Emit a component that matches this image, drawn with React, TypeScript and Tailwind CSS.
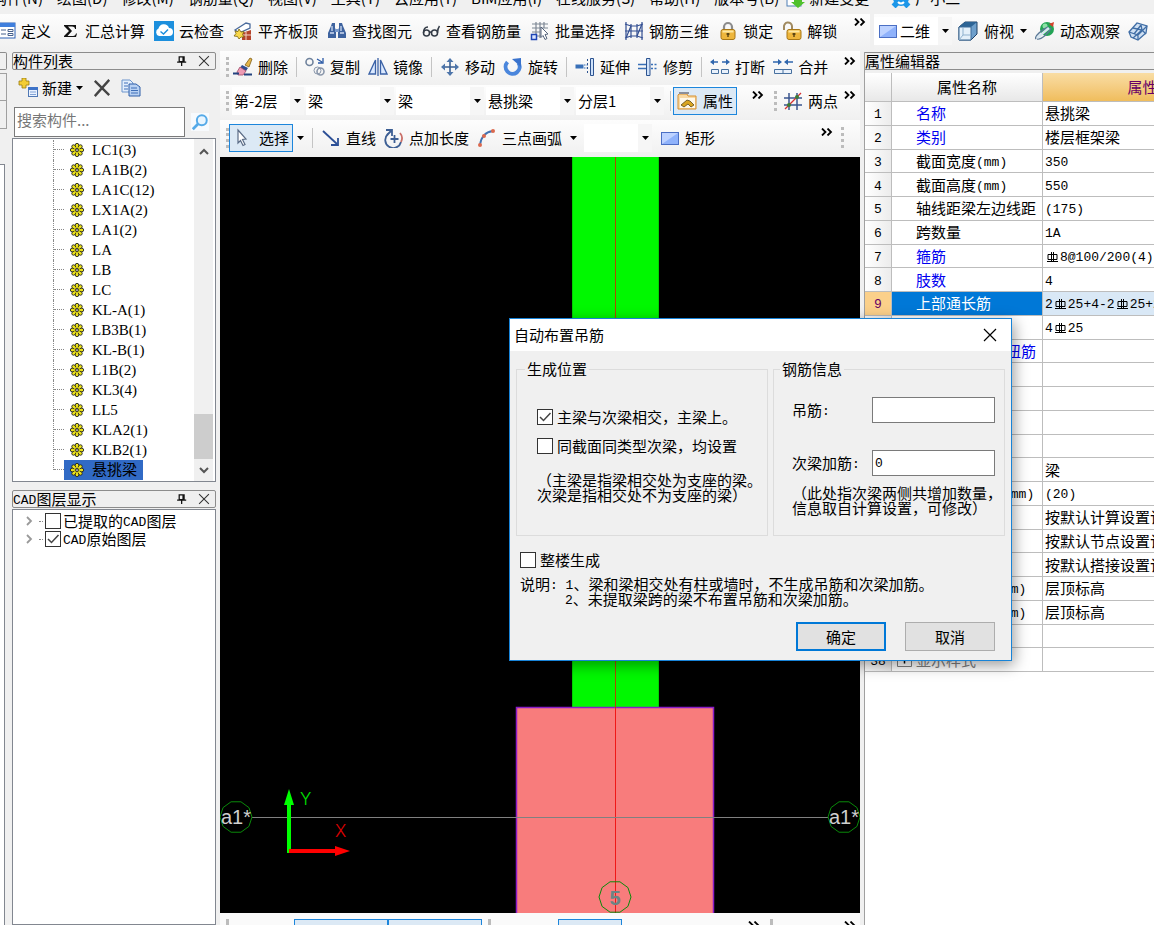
import type { ReactNode } from 'react';

const MENUS = ['绘图(D)', '修改(M)', '钢筋量(Q)', '视图(V)', '工具(T)', '云应用(Y)', 'BIM应用(I)', '在线服务(S)', '帮助(H)', '版本号(B)'];

const COMPONENTS = [
  'LC1(3)', 'LA1B(2)', 'LA1C(12)', 'LX1A(2)', 'LA1(2)', 'LA', 'LB', 'LC', 'KL-A(1)',
  'LB3B(1)', 'KL-B(1)', 'L1B(2)', 'KL3(4)', 'LL5', 'KLA2(1)', 'KLB2(1)', '悬挑梁',
];

type Prop = { no: string; name: string; value: string; blue?: boolean; child?: boolean; active?: boolean; group?: boolean };

const PROPS: Prop[] = [
  { no: '1', name: '名称', value: '悬挑梁', blue: true },
  { no: '2', name: '类别', value: '楼层框架梁', blue: true },
  { no: '3', name: '截面宽度(mm)', value: '350' },
  { no: '4', name: '截面高度(mm)', value: '550' },
  { no: '5', name: '轴线距梁左边线距', value: '(175)' },
  { no: '6', name: '跨数量', value: '1A' },
  { no: '7', name: '箍筋', value: 'Φ8@100/200(4)', blue: true },
  { no: '8', name: '肢数', value: '4', blue: true },
  { no: '9', name: '上部通长筋', value: '2Φ25+4-2Φ25+2', active: true },
  { no: '10', name: '下部通长筋', value: '4Φ25', blue: true },
  { no: '11', name: '侧面构造或受扭筋', value: '', blue: true },
  { no: '12', name: '侧面纵筋', value: '' },
  { no: '13', name: '拉筋', value: '' },
  { no: '14', name: '其它箍筋', value: '' },
  { no: '15', name: '其它属性', value: '', group: true },
  { no: '16', name: '汇总信息', value: '梁', child: true },
  { no: '17', name: '保护层厚度(mm)', value: '(20)', child: true },
  { no: '18', name: '计算设置', value: '按默认计算设置计算', child: true },
  { no: '19', name: '节点设置', value: '按默认节点设置计算', child: true },
  { no: '20', name: '搭接设置', value: '按默认搭接设置计算', child: true },
  { no: '21', name: '起点顶标高(m)', value: '层顶标高', child: true },
  { no: '22', name: '终点顶标高(m)', value: '层顶标高', child: true },
  { no: '23', name: '锚固搭接', value: '', group: true },
  { no: '38', name: '显示样式', value: '', group: true },
];

const PETALS = Array.from({ length: 8 }, (_, i) => (i * Math.PI) / 4);

/* ---------- icons, all on a 20 x 20 grid ---------- */

const ICONS: Record<string, ReactNode> = {
  define: (
    <>
      <rect x="1" y="2" width="18" height="15" fill="#fff" stroke="#2f62b5" />
      <rect x="1" y="2" width="18" height="4" fill="#3f7fdd" />
      <path d="M5 9h5M5 13h5M12 8.500h5v2h-5zM12 12.500h5v2h-5z" stroke="#47618c" fill="none" />
    </>
  ),
  sigma: <path d="M4 4h12v4h-1c0-1.500-1-2.500-3-2.500H8l4 4.500-4.500 5H13c2 0 2.500-1 3-2.500h1L16 16H4v-1l5-5-5-5z" fill="#111" />,
  cloud: (
    <>
      <rect width="20" height="20" fill="#1c8fdd" />
      <path d="M5 15a4 4 0 0 1-.5-7.500A5.500 5.500 0 0 1 15 7a4 4 0 0 1 0 8z" fill="#fff" />
      <path d="M6.500 10.500l3 2.500 4.500-4.500" stroke="#1c8fdd" strokeWidth="1.500" fill="none" />
    </>
  ),
  align: (
    <>
      <path d="M2 9L13 2l4 1v4L6 12z" fill="#fff" stroke="#4a6a9c" strokeWidth="1.300" />
      <path d="M9 12l9-3v10H9z" fill="#b4432b" />
      <path d="M13 11v8M9 14h9" stroke="#f1d5c8" />
      <path d="M6 8l2 3 3-.5-1.500 3L11 16H8l-2 2-1.500-2.500L1 15l2-2.500L2 10l3 .5z" fill="#f9d849" stroke="#7a6512" strokeWidth=".8" />
    </>
  ),
  find: (
    <>
      <path d="M5 2h3v5l1 2v8H1v-5l3-7zM12 2h3l1 3 3 7v5h-8V9l1-2z" fill="#3e639f" />
      <path d="M8 8h4v3H8z" fill="#7d9ccc" />
      <path d="M3 12h4M13 12h4M5 5v5M14 5v5" stroke="#cfdcf2" strokeWidth="1.300" />
    </>
  ),
  glasses: (
    <g fill="none" stroke="#333b46" strokeWidth="1.500">
      <circle cx="5.500" cy="12" r="3" />
      <circle cx="13.500" cy="12" r="3" />
      <path d="M2.500 12c0-4 2-6 4.500-6M16.500 12c0-3 .5-5 2-7M8.500 11.500q1-1 2 0" />
    </g>
  ),
  batch: (
    <>
      <path d="M2 3h16M2 7h16M2 11h8M6 1v16M10 1v16M14 1v6M6 15h6" stroke="#7d8794" strokeWidth="1.200" />
      <rect x="1.500" y="13.500" width="5" height="5" fill="#dbe6ff" stroke="#1f46b5" strokeWidth="1.500" />
      <path d="M11 6l7 7-3 .5 2 4-2 1-2-4-2 2z" fill="#fff" stroke="#56657d" />
    </>
  ),
  rebar3d: (
    <g stroke="#334f92" strokeWidth="1.200" fill="none">
      <path d="M2 1v18M7 3v14M13 3v14M18 1v18" />
      <path d="M1 3l6 2h6l6-2M1 10h18M1 17l6-2h6l6 2M2 17L7 5M13 15l5-12" />
    </g>
  ),
  lock: (
    <>
      <path d="M6 10V6a4 4 0 0 1 8 0v4" fill="none" stroke="#8c8c8c" strokeWidth="2.200" />
      <rect x="3" y="8.500" width="14" height="10" rx="2" fill="#eeb63c" stroke="#a87716" />
      <path d="M4.500 10.500h11" stroke="#fde7a1" strokeWidth="2" />
      <path d="M10 12v4M8.500 13h3" stroke="#4d3a10" strokeWidth="1.300" />
    </>
  ),
  unlock: (
    <>
      <path d="M2 9V6a4 4 0 0 1 8-1v4" fill="none" stroke="#a08a60" strokeWidth="2" />
      <rect x="5" y="8.500" width="14" height="10" rx="2" fill="#eeb63c" stroke="#a87716" />
      <path d="M6.500 10.500h11" stroke="#fde7a1" strokeWidth="2" />
      <path d="M12 12v4M10.500 13h3" stroke="#4d3a10" strokeWidth="1.300" />
    </>
  ),
  rect: (
    <>
      <rect x="1.500" y="4.500" width="17" height="12" fill="#8fb2fb" stroke="#4b6fc4" />
      <path d="M2 16V5h16z" fill="#bdd2ff" />
    </>
  ),
  cube: (
    <>
      <path d="M1 6l6-5h12v12l-6 6H1z" fill="#6e9fcb" stroke="#1f4064" />
      <path d="M1 6l6-5h12l-6 5z" fill="#2d6495" />
      <path d="M1 6h12v13H1z" fill="#e4f0fa" stroke="#3d6b97" />
      <path d="M5 7v7l-4 5M5 14h8" fill="none" stroke="#8fb1ce" />
    </>
  ),
  orbit: (
    <>
      <circle cx="12" cy="8" r="7" fill="#23a455" />
      <circle cx="10" cy="5" r="2.500" fill="#8be2a5" />
      <path d="M1 18c-2-3 6-9 12-12" fill="none" stroke="#5a7896" strokeWidth="1.500" />
      <path d="M2 18c4 1 12-6 14-11" fill="none" stroke="#5a7896" strokeWidth="1.500" />
      <path d="M2 17L14 7" stroke="#d7e6f0" strokeWidth="2.500" />
      <path d="M14 3l5-2-1 5" fill="#d6402c" />
    </>
  ),
  mesh: (
    <g fill="#cfe0f3" stroke="#3f6da5" strokeWidth="1.300">
      <path d="M1 11l8-9 10 3-1 7-8 7-7-3z" />
      <path d="M1 11l9 3 9-9M10 14v5M5 7l9 2 4 4M5 17l9-8-1-5M6 13l7-9" fill="none" />
    </g>
  ),
  erase: (
    <>
      <path d="M12 8l5-7 2 1-3 8z" fill="#e5b64a" stroke="#806019" strokeWidth=".8" />
      <path d="M9 8l6 3-2 3-6-3z" fill="#2e4c92" />
      <path d="M7 10l6 4-3 4H5l-1-3z" fill="#ee9bb4" stroke="#a04a68" strokeWidth=".8" />
      <path d="M0 16.500h6M11 17.500h8" stroke="#23427f" strokeWidth="2" />
    </>
  ),
  copyObj: (
    <g fill="none">
      <circle cx="4.500" cy="5" r="3.500" stroke="#70839d" strokeWidth="1.600" />
      <circle cx="15.500" cy="14.500" r="3.500" stroke="#8a97ab" strokeWidth="1.600" />
      <circle cx="12.500" cy="13.500" r="3.500" stroke="#8a97ab" />
      <path d="M12 2l5 3M18 1v5h-5" stroke="#2b5aa6" strokeWidth="1.300" />
    </g>
  ),
  mirror: (
    <g fill="#dbe9ff" stroke="#3b62a6" strokeWidth="1.300">
      <path d="M7.500 3v14H1zM12.500 3v14H19z" />
      <path d="M10 1v18" />
    </g>
  ),
  move: (
    <>
      <path d="M10 3v14M3 10h14" stroke="#3a5f93" strokeWidth="1.600" />
      <path d="M10 1l3.500 4h-7zM10 19l3.500-4h-7zM1 10l4-3.500v7zM19 10l-4-3.500v7z" fill="#4d75ab" />
    </>
  ),
  rotate: (
    <>
      <path d="M4.500 5a7 7 0 1 0 11 1" fill="none" stroke="#4a86dc" strokeWidth="4" />
      <path d="M9 2l9-1v9z" fill="#3a73cd" />
    </>
  ),
  extend: (
    <>
      <path d="M.5 7.500h8v4h-8z" fill="#3970b8" />
      <path d="M9 8h5M9 11h5" stroke="#3970b8" strokeDasharray="1.500 1" />
      <path d="M15.500 1.500h3v17h-3z" fill="#cfe2fa" stroke="#2c5390" />
      <path d="M12.500 2v16" stroke="#2c5390" strokeDasharray="2 2" />
    </>
  ),
  trim: (
    <>
      <path d="M0 7.500h8M0 11.500h8" stroke="#3970b8" strokeWidth="1.400" />
      <path d="M13 7.500h7M13 11.500h7" stroke="#3970b8" strokeWidth="1.400" strokeDasharray="2 1.500" />
      <path d="M8.500 1.500h3.500v17H8.500z" fill="#cfe2fa" stroke="#2c5390" />
    </>
  ),
  breakObj: (
    <>
      <path d="M8 5H2M12 5h6" stroke="#2f66ad" strokeWidth="1.500" />
      <path d="M0 5l4-3v6zM20 5l-4-3v6z" fill="#2f66ad" />
      <path d="M1.500 12.500h7v4h-7zM11.500 12.500h7v4h-7z" fill="#e9f1fb" stroke="#47709f" />
    </>
  ),
  merge: (
    <>
      <path d="M0 5h6M20 5h-6" stroke="#2f66ad" strokeWidth="1.500" />
      <path d="M9 5L5 2v6zM11 5l4-3v6z" fill="#2f66ad" />
      <path d="M1.500 12.500h17v4h-17zM10 12.500v4" fill="#e9f1fb" stroke="#47709f" />
    </>
  ),
  propFolder: (
    <>
      <path d="M2 3h8l1 2h8v13H1V4z" fill="#f8d9a4" stroke="#d8902d" />
      <path d="M2 1h10v2H2z" fill="#8b8f99" />
      <rect x="3" y="7" width="15" height="10" fill="#fff8e8" />
      <path d="M4 14l6-5 3 1 4 4-3 2-3-3-4 3z" fill="#d9a520" stroke="#5e4a17" strokeWidth=".8" />
    </>
  ),
  twoPoint: (
    <>
      <path d="M6 2v17M14 2v17M1 7h18M1 14h18" stroke="#3b568f" strokeWidth="1.500" />
      <path d="M2 18L18 2" stroke="#d83131" strokeWidth="1.200" />
      <circle cx="6" cy="14" r="2" fill="#3b7d34" />
      <circle cx="14" cy="6" r="2" fill="#3b7d34" />
    </>
  ),
  cursor: <path d="M5 2l8 9-3.500.5 2.500 5-2 1-2.500-5L5 15z" fill="#fff" stroke="#5b6c86" strokeWidth="1.200" />,
  line: (
    <>
      <path d="M2 3l14 13" stroke="#2c4f96" strokeWidth="1.800" />
      <path d="M17 10v7h-7" fill="none" stroke="#2c4f96" strokeWidth="1.800" />
    </>
  ),
  pointLen: (
    <g fill="none" strokeWidth="1.800">
      <path d="M4 6a8 8 0 1 0 13 8" stroke="#3d5f94" />
      <path d="M16 5a8 8 0 0 1 1 9" stroke="#c96f68" />
      <path d="M10.500 7v8M6.500 11h8M2 2h6v6M8 2L3 7" stroke="#3d5f94" />
    </g>
  ),
  arc: (
    <>
      <path d="M3 17C4 9 8 4 16 3" fill="none" stroke="#4173b3" strokeWidth="1.800" />
      <g fill="#dc6a4e">
        <circle cx="3" cy="17" r="2" />
        <circle cx="7" cy="8" r="2" />
        <circle cx="16" cy="3" r="2" />
      </g>
    </>
  ),
  newItem: (
    <>
      <path d="M4 0h4v3h3v4H8v3H4V7H1V3h3z" fill="#f3cd35" stroke="#9a7b10" strokeWidth=".8" />
      <rect x="10.500" y="9.500" width="9" height="9" fill="#eaf2ff" stroke="#5078b4" />
      <path d="M10 9h10v3H10z" fill="#3e73c8" />
      <path d="M12 14h6M12 16.500h6" stroke="#83a4d6" />
    </>
  ),
  cross: <path d="M2 2l16 16M18 1L2 19" stroke="#444" strokeWidth="2.600" fill="none" />,
  pages: (
    <>
      <path d="M1 2h8l3 3v9H1z" fill="#e3eefc" stroke="#6d95cc" />
      <path d="M8 6h7l4 3v9H8z" fill="#b8d1f3" stroke="#2f5fa8" />
      <path d="M3 5h4M3 8h4M3 11h4M10 10h6M10 12.500h7M10 15h7" stroke="#3f6fb8" />
    </>
  ),
  search: (
    <>
      <circle cx="12" cy="8" r="5.500" fill="#e8f5ff" stroke="#55aae8" strokeWidth="2.200" />
      <path d="M8 12l-6 6" stroke="#55aae8" strokeWidth="3" />
    </>
  ),
  gear: (
    <>
      {PETALS.map((a) => (
        <circle key={a} cx={10 + 7 * Math.cos(a)} cy={10 + 7 * Math.sin(a)} r="2.500" fill="#ece21a" stroke="#222" strokeWidth="1.300" />
      ))}
      <circle cx="10" cy="10" r="7" fill="#ece21a" />
      {PETALS.map((a) => (
        <path
          key={a}
          d={`M${10 + 4 * Math.cos(a + 0.39)} ${10 + 4 * Math.sin(a + 0.39)}L${10 + 7.5 * Math.cos(a + 0.39)} ${10 + 7.5 * Math.sin(a + 0.39)}`}
          stroke="#222"
          strokeWidth="1.300"
        />
      ))}
      <circle cx="10" cy="10" r="2" fill="#ddd" stroke="#222" strokeWidth="1.500" />
    </>
  ),
  pin: <path d="M6 4h7v7H6zM11.500 4v7M3 11.500h13M9.500 12v5" fill="none" stroke="#111" strokeWidth="1.800" />,
  close: <path d="M3 3l14 14M17 3L3 17" stroke="#333" strokeWidth="1.500" />,
  change: (
    <>
      <rect x="2" y="1" width="14" height="17" fill="#fff" stroke="#4f7fb5" />
      <path d="M9 9h8v5h3l-7 6-7-6h3z" fill="#4fc12c" />
    </>
  ),
  assistant: (
    <>
      <circle cx="10" cy="10" r="8" fill="#1c96e8" />
      <path d="M2 15l4 4M18 15l-4 4" stroke="#1c96e8" strokeWidth="4" />
      <path d="M7 14q3 3 6 0" stroke="#fff" strokeWidth="2" fill="none" />
    </>
  ),
};

function Icon({ name, className = 'size-5' }: { name: string; className?: string }) {
  return (
    <svg viewBox="0 0 20 20" className={`shrink-0 ${className}`} aria-hidden="true">
      {ICONS[name]}
    </svg>
  );
}

/* Song-style text: half-width runs are set narrower than the Chinese, Φ is the rebar grade sign */
function Song({ text }: { text: string }) {
  return (
    <>
      {text.split(/([ -~]+|Φ)/).map((run, i) => {
        if (run === 'Φ') {
          return (
            <svg key={i} viewBox="0 0 15 12" className="inline-block h-3 w-[15px] align-[-1px]" role="img" aria-label="钢筋">
              <path d="M3 3.500h9v5H3zM6.500 1v10M8.500 1v10M2 10.500h11" fill="none" stroke="currentColor" />
            </svg>
          );
        }
        return /^[ -~]+$/.test(run) ? (
          <span key={i} className="whitespace-pre align-[1px] font-['Liberation_Mono',monospace] text-[13px] leading-none">{run}</span>
        ) : (
          run
        );
      })}
    </>
  );
}

function Tool({ icon, label }: { icon: string; label: string }) {
  return (
    <button type="button" className="flex shrink-0 items-center gap-[5px] whitespace-nowrap">
      <Icon name={icon} />
      {label}
    </button>
  );
}

function Caret() {
  return (
    <svg viewBox="0 0 7 4" className="h-1 w-[7px] shrink-0" aria-hidden="true">
      <path d="M0 0h7L3.500 4z" fill="#000" />
    </svg>
  );
}

function More({ className = '' }: { className?: string }) {
  return (
    <button type="button" aria-label="更多" className={`w-3 shrink-0 self-start ${className}`}>
      <svg viewBox="0 0 12 8" className="h-2 w-3" aria-hidden="true">
        <path d="M1 .5L4.500 4 1 7.500M6.500 .5L10 4 6.500 7.500" fill="none" stroke="#000" strokeWidth="1.800" />
      </svg>
    </button>
  );
}

function Grip() {
  return <span className="h-5 shrink-0 border-l-[3px] border-dotted border-[#bcbcbc]" />;
}

function Sep() {
  return <span className="h-5 w-px shrink-0 bg-[#c4c4c4]" />;
}

function Combo({ label, value, className }: { label: string; value: string; className: string }) {
  return (
    <span className={`relative h-7 shrink-0 bg-white ${className}`}>
      <select aria-label={label} className="h-full w-full appearance-none bg-transparent pl-0.5 pr-4 outline-none">
        <option>{value}</option>
      </select>
      <span className="pointer-events-none absolute inset-y-0 right-0 flex w-3.5 items-center justify-center bg-[#f6f6f6]">
        <Caret />
      </span>
    </span>
  );
}

function Check({ id, checked = false }: { id: string; checked?: boolean }) {
  return (
    <span className="relative size-4 shrink-0">
      <input id={id} type="checkbox" defaultChecked={checked} className="peer block size-4 appearance-none border border-[#333] bg-white" />
      <svg viewBox="0 0 16 16" className="pointer-events-none absolute inset-0 hidden size-4 peer-checked:block" aria-hidden="true">
        <path d="M3 8l3.500 3.500L13.500 4" fill="none" stroke="#444" strokeWidth="1.500" />
      </svg>
    </span>
  );
}

function PanelTitle({ title }: { title: string }) {
  return (
    <div className="flex h-[18px] items-center gap-2 rounded-xs border border-[#8c8c8c] bg-[#efefef] pr-1">
      <h2 className="flex-1 whitespace-nowrap leading-4"><Song text={title} /></h2>
      <button type="button" aria-label="固定"><Icon name="pin" className="size-3.5" /></button>
      <button type="button" aria-label="关闭"><Icon name="close" className="size-3.5" /></button>
    </div>
  );
}

const BAR = 'flex items-center bg-linear-to-b from-[#fdfdfd] to-[#f0f0f0]';

function TopBars() {
  return (
    <header className="overflow-hidden">
      <nav className="flex h-3.5 items-end gap-3.5 whitespace-nowrap pb-1.5">
        <a href="#" className="-ml-2">构件(N)</a>
        {MENUS.map((m) => (
          <a key={m} href="#">{m}</a>
        ))}
        <a href="#" className="-ml-2 flex items-center gap-1"><Icon name="change" />新建变更</a>
        <a href="#" className="ml-2 flex items-center gap-1"><Icon name="assistant" />广小二</a>
      </nav>
      <div className="flex h-[37px]">
        <div className={`${BAR} flex-1 gap-2 overflow-hidden pb-1`}>
          <div className="-ml-1 flex items-center gap-[9px]">
            <Tool icon="define" label="定义" />
            <Tool icon="sigma" label="汇总计算" />
            <Tool icon="cloud" label="云检查" />
            <Tool icon="align" label="平齐板顶" />
            <Tool icon="find" label="查找图元" />
            <Tool icon="glasses" label="查看钢筋量" />
            <Tool icon="batch" label="批量选择" />
            <Tool icon="rebar3d" label="钢筋三维" />
            <Tool icon="lock" label="锁定" />
            <Tool icon="unlock" label="解锁" />
          </div>
          <More className="ml-auto mr-1 mt-1" />
        </div>
        <div className={`${BAR} ml-1 w-[280px] shrink-0 gap-2 overflow-hidden pb-1`}>
          <div className="flex items-center bg-white pl-1">
            <Icon name="rect" />
            <Combo label="视图维度" value="二维" className="w-[54px]" />
          </div>
          <button type="button" className="-ml-0.5 flex shrink-0 items-center gap-1.5"><Icon name="cube" />俯视<Caret /></button>
          <Tool icon="orbit" label="动态观察" />
          <button type="button" aria-label="网格"><Icon name="mesh" /></button>
        </div>
      </div>
    </header>
  );
}

function LeftPanel() {
  return (
    <aside className="flex w-[204px] shrink-0 flex-col">
      <PanelTitle title="构件列表" />
      <div className="flex h-[35px] items-center gap-2.5 pl-1.5">
        <button type="button" className="flex items-center gap-1"><Icon name="newItem" />新建<Caret /></button>
        <button type="button" aria-label="删除构件"><Icon name="cross" className="size-[18px]" /></button>
        <button type="button" aria-label="复制构件"><Icon name="pages" /></button>
      </div>
      <div className="flex h-[33px] items-center gap-1.5 pl-0.5">
        <input aria-label="搜索构件" placeholder="搜索构件..." className="h-[30px] w-[171px] border border-[#7a7a7a] bg-white pb-1 pl-0.5 outline-none placeholder:text-[#777]" />
        <button type="button" aria-label="搜索" className="bg-[#f7fafd]"><Icon name="search" className="size-[18px]" /></button>
      </div>
      <div className="flex border border-[#828790] bg-white">
        <ul className="flex-1 py-px pl-10">
          {COMPONENTS.map((name, i) => {
            const last = i === COMPONENTS.length - 1;
            return (
              <li key={name} className="flex h-5">
                <span className={`w-0 border-l border-dotted border-[#888] ${last ? 'h-2.5' : 'h-5'}`} />
                <span className="h-2.5 w-2.5 border-b border-dotted border-[#888]" />
                <span className={`flex items-center gap-2 whitespace-nowrap px-1.5 font-['Liberation_Serif','Noto_Sans_CJK_SC',serif] ${last ? 'bg-[#316ac5]' : ''}`}>
                  <Icon name="gear" className="size-3.5" />
                  {name}
                </span>
              </li>
            );
          })}
        </ul>
        <div className="mr-0.5 flex w-[19px] flex-col items-center bg-[#f0f0f0]">
          <svg viewBox="0 0 10 10" className="mt-2 size-2.5"><path d="M1 7l4-4 4 4" fill="none" stroke="#555" strokeWidth="2" /></svg>
          <span className="mt-auto h-[45px] w-full bg-[#cdcdcd]" />
          <svg viewBox="0 0 10 10" className="my-1.5 size-2.5"><path d="M1 3l4 4 4-4" fill="none" stroke="#555" strokeWidth="2" /></svg>
        </div>
      </div>
      <div className="h-2 shrink-0" />
      <PanelTitle title="CAD图层显示" />
      <ul className="mt-px flex-1 border border-[#828790] bg-white pl-3 pt-0.5">
        {['已提取的CAD图层', 'CAD原始图层'].map((name, i) => (
          <li key={name} className="flex h-[18px] items-center gap-0.5">
            <svg viewBox="0 0 8 10" className="h-2.5 w-2"><path d="M2 1l4 4-4 4" fill="none" stroke="#999" strokeWidth="1.800" /></svg>
            <span className="ml-1 w-1 border-b border-dotted border-[#888]" />
            <Check id={`layer-${i}`} checked={i === 1} />
            <label htmlFor={`layer-${i}`} className="whitespace-nowrap leading-[18px]"><Song text={name} /></label>
          </li>
        ))}
      </ul>
    </aside>
  );
}

/* ten-sided axis bubble */
function Bubble({ cx, cy }: { cx: number; cy: number }) {
  const pts = Array.from({ length: 10 }, (_, i) => {
    const a = (i * Math.PI) / 5;
    return `${cx + 16 * Math.cos(a)},${cy + 16 * Math.sin(a)}`;
  }).join(' ');
  return <polygon points={pts} fill="none" stroke="#0a8a0a" />;
}

function Drawing() {
  return (
    <div className="min-h-0 flex-1 bg-black">
      <svg viewBox="0 0 640 756" preserveAspectRatio="xMidYMid slice" className="block h-full w-full">
        <rect x="352.500" y="-20" width="86" height="571" fill="#00f800" stroke="#00d000" />
        <rect x="296.500" y="550.500" width="197" height="240" fill="#f87c7c" stroke="#8a1cc8" strokeWidth="1.500" />
        <path d="M395.500 -20V551" stroke="#b04a00" />
        <path d="M395.500 551V760" stroke="#f01818" />
        <path d="M32 660.500H608" stroke="#808080" strokeWidth="1.200" />
        <Bubble cx={16} cy={660} />
        <Bubble cx={624} cy={660} />
        <Bubble cx={395} cy={740} />
        <g fill="#cfcfcf" fontFamily="Liberation Sans, sans-serif" fontSize="20">
          <text x="1" y="667">a1*</text>
          <text x="609" y="667">a1*</text>
        </g>
        <text x="395" y="748" textAnchor="middle" fill="#6a8484" fontFamily="Liberation Sans, sans-serif" fontSize="20" fontWeight="700">5</text>
        <path d="M67 643h4v53h-4z" fill="#0f0" />
        <path d="M69 632l5 16H64z" fill="#0f0" />
        <path d="M69 692h48v4H69z" fill="#f00" />
        <path d="M130 694l-15-5v10z" fill="#f00" />
        <g fontFamily="Inter, sans-serif" fontWeight="300" fontSize="17">
          <text x="80" y="648" fill="#00e000">Y</text>
          <text x="115" y="680" fill="#e00000">X</text>
        </g>
      </svg>
    </div>
  );
}

function Workspace() {
  return (
    <main className="flex min-w-0 flex-1 flex-col">
      <div className={`${BAR} h-[34px] gap-2 pb-0.5 pl-1.5`}>
        <Grip />
        <div className="-ml-1 flex items-center gap-2">
          <Tool icon="erase" label="删除" />
          <Sep />
          <Tool icon="copyObj" label="复制" />
          <Tool icon="mirror" label="镜像" />
          <Sep />
          <Tool icon="move" label="移动" />
          <Tool icon="rotate" label="旋转" />
          <Sep />
          <Tool icon="extend" label="延伸" />
          <Tool icon="trim" label="修剪" />
          <Sep />
          <Tool icon="breakObj" label="打断" />
          <Tool icon="merge" label="合并" />
        </div>
        <More className="ml-auto mr-1 mt-1.5" />
      </div>
      <div className={`${BAR} h-[35px] gap-0.5 pb-1 pl-1.5`}>
        <Grip />
        <Combo label="楼层" value="第-2层" className="ml-px w-[72px]" />
        <Combo label="构件类型" value="梁" className="w-[88px]" />
        <Combo label="构件类别" value="梁" className="w-[88px]" />
        <Combo label="构件名称" value="悬挑梁" className="w-[88px]" />
        <Combo label="分层" value="分层1" className="mr-1 w-[88px]" />
        <Sep />
        <button type="button" className="flex h-7 w-16 shrink-0 items-center justify-center gap-1.5 border border-[#1c86dc] bg-[#dce9f5]">
          <Icon name="propFolder" />
          属性
        </button>
        <More className="ml-auto mt-1.5" />
        <div className="ml-2 flex shrink-0 items-center gap-1.5">
          <Grip />
          <Tool icon="twoPoint" label="两点" />
        </div>
        <More className="ml-1 mr-1 mt-1.5" />
      </div>
      <div className={`${BAR} h-[37px] gap-2 pb-0.5 pl-1.5`}>
        <Grip />
        <button type="button" className="-ml-2 flex h-7 w-16 shrink-0 items-center justify-center gap-1.5 border border-[#1c86dc] bg-[#dce9f5]">
          <Icon name="cursor" />
          选择
        </button>
        <button type="button" aria-label="选择方式" className="-ml-1"><Caret /></button>
        <Sep />
        <Tool icon="line" label="直线" />
        <Tool icon="pointLen" label="点加长度" />
        <Tool icon="arc" label="三点画弧" />
        <button type="button" aria-label="画弧方式"><Caret /></button>
        <Combo label="绘制参数" value="" className="-ml-px w-[68px]" />
        <Tool icon="rect" label="矩形" />
        <More className="ml-auto mt-2" />
        <span className="mr-4"><Grip /></span>
      </div>
      <Drawing />
      <div className="flex h-3 overflow-hidden bg-[#fafafa] pt-1.5">
        <span className="ml-1.5 w-[68px] border-l-[3px] border-dotted border-[#bcbcbc]" />
        <button type="button" aria-label="正交" className="h-7 w-[94px] border border-[#1c86dc] bg-[#dce9f5]" />
        <button type="button" aria-label="捕捉" className="h-7 w-[94px] border border-[#1c86dc] bg-[#dce9f5]" />
        <span className="ml-1.5 w-[70px] border-l-[3px] border-dotted border-[#bcbcbc]" />
        <button type="button" aria-label="交点" className="h-7 w-16 border border-[#1c86dc] bg-[#dce9f5]" />
        <More className="ml-auto mt-0.5" />
        <span className="ml-2.5 w-[70px] border-l-[3px] border-dotted border-[#bcbcbc]" />
        <More className="ml-1 mr-1 mt-0.5" />
      </div>
    </main>
  );
}

function PropertyPanel() {
  return (
    <aside className="flex w-[290px] shrink-0 flex-col overflow-hidden border-l border-[#a0a0a0] bg-white">
      <div className="h-[18px] border-y border-[#8c8c8c] bg-[#efefef]">
        <h2 className="leading-4">属性编辑器</h2>
      </div>
      <div className="h-[3px] shrink-0 bg-[#f0f0f0]" />
      <div>
        <table className="h-[599px] w-[392px] table-fixed border-separate border-spacing-0">
          <thead>
            <tr>
              <th className="h-[29px] w-[27px] border-b border-r border-[#bdbdbd] bg-linear-to-b from-white to-[#e8e8e8] p-0" />
              <th className="w-[151px] border-b border-r border-[#bdbdbd] bg-linear-to-b from-white to-[#e8e8e8] p-0 font-normal">属性名称</th>
              <th className="border-b border-[#bdbdbd] bg-linear-to-b from-[#f9dda4] to-[#f0bd5c] p-0 font-normal text-[#660066]">属性值</th>
            </tr>
          </thead>
          <tbody>
            {PROPS.map((p) => (
              <tr key={p.no} className="leading-5">
                <td className={`border-b border-r border-[#bdbdbd] p-0 text-center ${p.active ? 'bg-[#fbd08a] text-[#660066]' : 'bg-linear-to-r from-white to-[#ececec]'}`}>
                  <Song text={p.no} />
                </td>
                <td
                  className={`whitespace-nowrap border-b border-r border-[#bdbdbd] p-0 ${p.active ? 'bg-[#0078d7] text-white' : p.blue ? 'text-[#0000f0]' : p.no === '38' ? 'text-[#808080]' : ''}`}
                >
                  <span className="flex items-center">
                    <span className={`flex h-5 shrink-0 items-center justify-center ${p.child ? 'w-9' : 'w-6'}`}>
                      {p.group && (
                        <svg viewBox="0 0 15 15" className="size-[15px]" aria-hidden="true">
                          <path d="M.5.5h14v14H.5z" fill="#fff" stroke="#808080" />
                          <path d="M3.500 7.500h8M7.500 3.500v8" stroke="#000" strokeWidth="1.500" />
                        </svg>
                      )}
                    </span>
                    <span><Song text={p.name} /></span>
                  </span>
                </td>
                <td className={`overflow-hidden whitespace-nowrap border-b border-[#bdbdbd] p-0 pl-0.5 ${p.active ? 'bg-[#d9e8f6]' : ''}`}>
                  <Song text={p.value} />
                </td>
              </tr>
            ))}
          </tbody>
        </table>
      </div>
    </aside>
  );
}

const FIELD = 'h-[26px] w-[123px] border border-[#7a7a7a] bg-white px-0.5 outline-none';

function HangerDialog() {
  return (
    <section
      role="dialog"
      aria-labelledby="dialog-title"
      className="absolute left-[509px] top-[318px] w-[503px] border border-[#1883d7] bg-[#f0f0f0] pb-[9px] shadow-[2px_4px_14px_rgba(0,0,0,0.4)]"
    >
      <div className="flex h-8 items-center justify-between bg-white pl-1 pr-3">
        <h2 id="dialog-title">自动布置吊筋</h2>
        <button type="button" aria-label="关闭">
          <svg viewBox="0 0 18 18" className="size-[18px]"><path d="M3 3l12 12M15 3L3 15" stroke="#000" strokeWidth="1.200" /></svg>
        </button>
      </div>
      <div className="flex gap-[5px] px-1.5 pt-2">
        <fieldset className="h-[177px] w-[252px] border border-[#dcdcdc] pl-5">
          <legend className="-ml-3 px-0.5">生成位置</legend>
          <div className="mt-7 flex items-center gap-1">
            <Check id="main-beam" checked />
            <label htmlFor="main-beam">主梁与次梁相交，主梁上。</label>
          </div>
          <div className="mt-[9px] flex items-center gap-1">
            <Check id="same-section" />
            <label htmlFor="same-section">同截面同类型次梁，均设置</label>
          </div>
          <p className="mt-4 whitespace-nowrap leading-[15px]">
            （主梁是指梁相交处为支座的梁。<br />次梁是指相交处不为支座的梁）
          </p>
        </fieldset>
        <fieldset className="h-[177px] min-w-0 flex-1 border border-[#dcdcdc] pl-[18px] pr-[9px]">
          <legend className="-ml-3 px-0.5">钢筋信息</legend>
          <div className="mt-[18px] flex items-center justify-between">
            <label htmlFor="hanger"><Song text="吊筋:" /></label>
            <input id="hanger" className={FIELD} />
          </div>
          <div className="mt-[27px] flex items-center justify-between">
            <label htmlFor="extra"><Song text="次梁加筋:" /></label>
            <input id="extra" defaultValue="0" className={`${FIELD} font-['Liberation_Mono',monospace] text-[13px]`} />
          </div>
          <p className="mt-[9px] whitespace-nowrap leading-[15px]">
            （此处指次梁两侧共增加数量，<br />信息取自计算设置，可修改）
          </p>
        </fieldset>
      </div>
      <div className="px-2.5">
        <div className="mt-3.5 flex items-center gap-1">
          <Check id="whole" />
          <label htmlFor="whole">整楼生成</label>
        </div>
        <p className="mt-1.5 h-[15px] whitespace-nowrap leading-[15px]">
          <Song text="说明: 1、梁和梁相交处有柱或墙时，不生成吊筋和次梁加筋。" />
        </p>
        <p className="h-[15px] whitespace-nowrap pl-[45px] leading-[15px]">
          <Song text="2、未提取梁跨的梁不布置吊筋和次梁加筋。" />
        </p>
      </div>
      <div className="mt-4 flex justify-end gap-[19px] pr-4">
        <button type="button" className="h-[29px] w-[90px] border-2 border-[#0078d7] bg-[#e1e1e1]">确定</button>
        <button type="button" className="h-[29px] w-[90px] border border-[#adadad] bg-[#e1e1e1]">取消</button>
      </div>
    </section>
  );
}

export default function App() {
  return (
    <div className="relative flex h-screen flex-col overflow-hidden bg-[#f0f0f0] font-['Noto_Sans_CJK_SC',sans-serif] text-[15px] leading-5 text-black">
      <TopBars />
      <div className="flex min-h-0 flex-1">
        <div className="mr-[5px] flex w-[7px] shrink-0 flex-col pt-px">
          <span className="h-[18px] rounded-r-xs border-y border-r border-[#8c8c8c]" />
          <span className="mt-[3px] h-7 border-y border-r border-[#a0a0a0]" />
          <span className="h-7 border-b border-r border-[#a0a0a0]" />
          <span className="mr-0.5 mt-[35px] flex-1 border-r border-t border-[#828790] bg-white" />
        </div>
        <div className="mr-1 flex pt-px">
          <LeftPanel />
        </div>
        <Workspace />
        <div className="ml-1 flex pt-px">
          <PropertyPanel />
        </div>
      </div>
      <HangerDialog />
    </div>
  );
}
